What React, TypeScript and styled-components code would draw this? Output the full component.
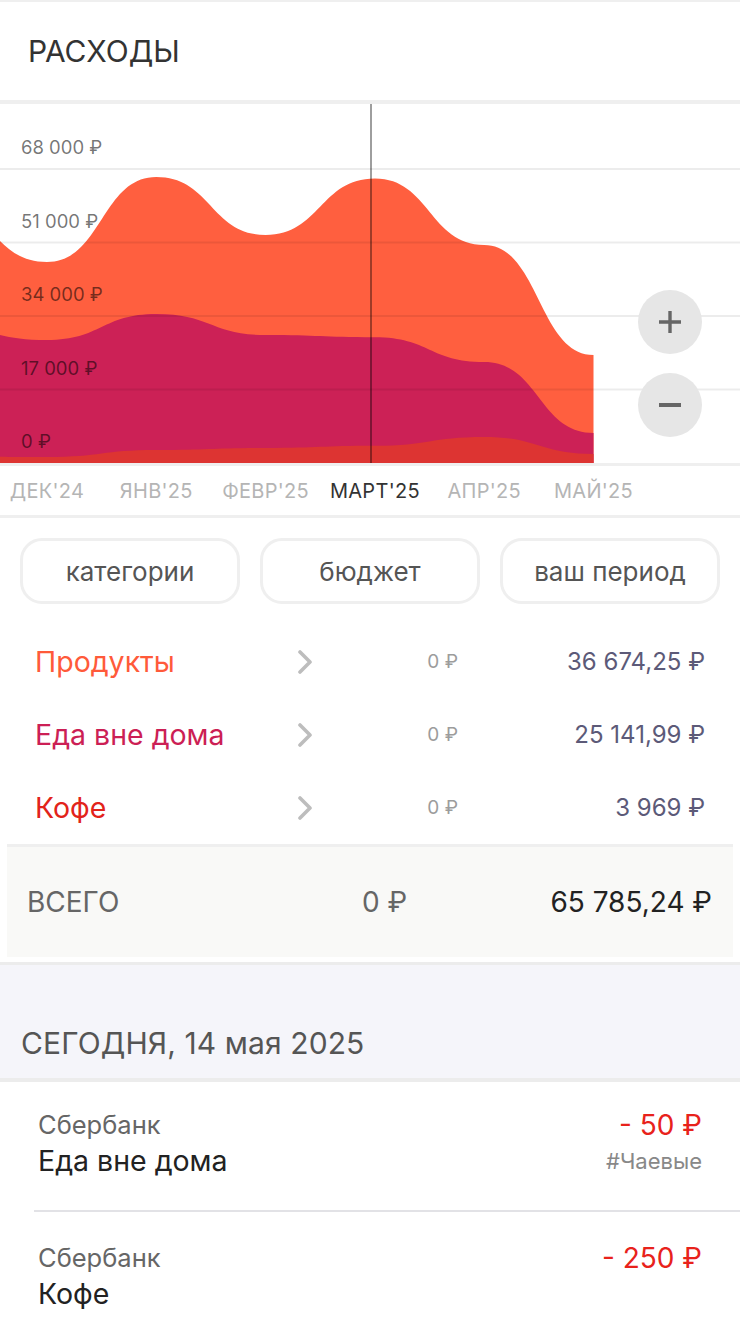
import React from "react";
import styled, { createGlobalStyle } from "styled-components";

interface Month {
  label: string;
  coffee: number;
  food: number;
  groceries: number;
}

interface Category {
  name: string;
  color: string;
  budget: string;
  amount: string;
}

interface Transaction {
  bank: string;
  category: string;
  amount: string;
  tag?: string;
}

// first month is off screen, only used so the curve enters from the left edge
const months: Month[] = [
  { label: "НОЯБ'24", coffee: 1620, food: 30070, groceries: 28210 },
  { label: "ДЕК'24", coffee: 1390, food: 27060, groceries: 18040 },
  { label: "ЯНВ'25", coffee: 3010, food: 31450, groceries: 31690 },
  { label: "ФЕВР'25", coffee: 3470, food: 26140, groceries: 23130 },
  { label: "МАРТ'25", coffee: 3969, food: 25142, groceries: 36674 },
  { label: "АПР'25", coffee: 6010, food: 17350, groceries: 27060 },
  { label: "МАЙ'25", coffee: 2080, food: 4860, groceries: 18040 },
];

const categories: Category[] = [
  { name: "Продукты", color: "#ff5a3a", budget: "0 ₽", amount: "36 674,25 ₽" },
  { name: "Еда вне дома", color: "#cc1f55", budget: "0 ₽", amount: "25 141,99 ₽" },
  { name: "Кофе", color: "#e2231a", budget: "0 ₽", amount: "3 969 ₽" },
];

const transactions: Transaction[] = [
  { bank: "Сбербанк", category: "Еда вне дома", amount: "- 50 ₽", tag: "#Чаевые" },
  { bank: "Сбербанк", category: "Кофе", amount: "- 250 ₽" },
];

const CHART_W = 740;
const CHART_H = 359;
const STEP = 109.3;
const FIRST_X = 47 - STEP;
const ACTIVE = 4;
const PX_PER_RUB = 73.5 / 17000;

const yOf = (v: number) => CHART_H - v * PX_PER_RUB;
const xOf = (i: number) => FIRST_X + i * STEP;

function areaPath(values: number[]) {
  const pts = values.map((v, i) => [xOf(i), yOf(v)]);
  let d = `M ${pts[0][0]} ${CHART_H} L ${pts[0][0]} ${pts[0][1]}`;
  for (let i = 1; i < pts.length; i++) {
    const [x0, y0] = pts[i - 1];
    const [x1, y1] = pts[i];
    const h = (x1 - x0) / 2;
    d += ` C ${x0 + h} ${y0} ${x1 - h} ${y1} ${x1} ${y1}`;
  }
  d += ` L ${pts[pts.length - 1][0]} ${CHART_H} Z`;
  return d;
}

const GlobalStyle = createGlobalStyle`
  html, body {
    margin: 0;
    padding: 0;
    background: #ffffff;
  }
  body {
    font-family: "Inter", "Roboto", "DejaVu Sans", sans-serif;
    -webkit-font-smoothing: antialiased;
  }
  * {
    box-sizing: border-box;
  }
`;

const Page = styled.div`
  width: 740px;
  background: #ffffff;
  overflow: hidden;
`;

const Header = styled.header`
  height: 104px;
  border-top: 2px solid #efefef;
  border-bottom: 4px solid #efefef;
  display: flex;
  align-items: center;
  padding-left: 28px;
`;

const Title = styled.h1`
  margin: 0;
  font-size: 30px;
  font-weight: 400;
  color: #333333;
`;

const ChartArea = styled.div`
  position: relative;
  height: 362px;
  border-bottom: 3px solid #efefef;

  svg {
    display: block;
  }
`;

const ZoomControls = styled.div`
  position: absolute;
  right: 38px;
  top: 186px;
  display: flex;
  flex-direction: column;
  gap: 19px;
`;

const ZoomButton = styled.button`
  width: 64px;
  height: 64px;
  border: none;
  border-radius: 50%;
  background: #e6e6e6;
  display: flex;
  align-items: center;
  justify-content: center;
  padding: 0;
`;

const AxisRow = styled.div`
  height: 52px;
  border-bottom: 3px solid #efefef;
  overflow: hidden;
`;

const AxisTrack = styled.div`
  height: 100%;
  margin-left: -7.65px;
  display: grid;
  grid-template-columns: repeat(6, ${STEP}px);
  align-items: center;
`;

const AxisLabel = styled.span<{ $active?: boolean }>`
  text-align: center;
  font-size: 20px;
  letter-spacing: 0.3px;
  color: ${(p) => (p.$active ? "#333333" : "#b5b5b5")};
`;

const Filters = styled.div`
  display: flex;
  gap: 20px;
  padding: 20px 20px 21px;
`;

const FilterButton = styled.button`
  flex: 1;
  height: 66px;
  border: 3px solid #efefef;
  border-radius: 22px;
  background: #ffffff;
  font-family: inherit;
  font-size: 26px;
  color: #555555;
`;

const CategoryRow = styled.div`
  display: grid;
  grid-template-columns: 255px 30px 138px 1fr;
  align-items: center;
  height: 73px;
  padding: 0 35px;
`;

const CategoryName = styled.span<{ $color: string }>`
  font-size: 28.5px;
  color: ${(p) => p.$color};
`;

const ChevronCell = styled.span`
  display: flex;
  justify-content: center;
`;

const Budget = styled.span`
  text-align: right;
  font-size: 19px;
  color: #9c9c9c;
`;

const Amount = styled.span`
  text-align: right;
  font-size: 24px;
  color: #5c5a78;
`;

const TotalBlock = styled.div`
  margin: 0 7px;
  height: 113px;
  border-top: 3px solid #efefef;
  background: #f9f9f7;
  display: grid;
  grid-template-columns: 335px auto 1fr;
  align-items: center;
  padding: 0 21px 0 20px;
`;

const TotalLabel = styled.span<{ $strong?: boolean }>`
  font-size: 28px;
  color: ${(p) => (p.$strong ? "#222222" : "#666666")};
  text-align: ${(p) => (p.$strong ? "right" : "left")};
`;

const DateSection = styled.div`
  margin-top: 5px;
  height: 120px;
  border-top: 3px solid #ececec;
  border-bottom: 4px solid #ececec;
  background: #f5f5fa;
  display: flex;
  align-items: flex-end;
  padding: 0 21px 17px;
`;

const DateTitle = styled.h2`
  margin: 0;
  font-size: 30px;
  line-height: 36px;
  font-weight: 400;
  letter-spacing: 0.1px;
  color: #555555;
`;

const TxItem = styled.div`
  margin-left: 34px;
  padding: 29px 38px 32px 4px;
  display: grid;
  grid-template-columns: 1fr auto;
  row-gap: 5px;

  & + & {
    border-top: 2px solid #e2e2e6;
    padding-top: 32px;
  }
`;

const TxBank = styled.span`
  font-size: 25.5px;
  line-height: 28px;
  color: #666666;
`;

const TxAmount = styled.span`
  text-align: right;
  font-size: 28px;
  line-height: 28px;
  color: #e8221b;
`;

const TxName = styled.span`
  font-size: 28.5px;
  line-height: 34px;
  color: #222222;
`;

const TxTag = styled.span`
  text-align: right;
  font-size: 22px;
  line-height: 34px;
  color: #888888;
`;

const Chevron = () => (
  <svg width="16" height="24" viewBox="0 0 16 24">
    <polyline
      points="3,2 13,12 3,22"
      fill="none"
      stroke="#bdbdbd"
      strokeWidth="3.6"
      strokeLinecap="round"
      strokeLinejoin="round"
    />
  </svg>
);

const Chart = () => {
  const coffee = months.map((m) => m.coffee);
  const food = months.map((m) => m.coffee + m.food);
  const total = months.map((m) => m.coffee + m.food + m.groceries);
  const ticks = [68000, 51000, 34000, 17000, 0];

  return (
    <svg width={CHART_W} height={CHART_H} viewBox={`0 0 ${CHART_W} ${CHART_H}`}>
      <path d={areaPath(total)} fill="#ff5f3f" />
      <path d={areaPath(food)} fill="#cc2156" />
      <path d={areaPath(coffee)} fill="#dd3432" />
      {ticks.map((t) => (
        <g key={t}>
          {t > 0 && (
            <line
              x1={0}
              x2={CHART_W}
              y1={yOf(t)}
              y2={yOf(t)}
              stroke="rgba(0,0,0,0.075)"
              strokeWidth={2}
            />
          )}
          <text
            x={21}
            y={yOf(t) - 15}
            fontSize={18.5}
            fill="rgba(0,0,0,0.55)"
            fontFamily="Inter, Roboto, sans-serif"
          >
            {t.toLocaleString("ru-RU").replace(/\u00a0|\u202f/g, " ")} ₽
          </text>
        </g>
      ))}
      <line x1={371} x2={371} y1={0} y2={CHART_H} stroke="rgba(0,0,0,0.38)" strokeWidth={2} />
    </svg>
  );
};

export default function App() {
  return (
    <Page>
      <GlobalStyle />
      <Header>
        <Title>РАСХОДЫ</Title>
      </Header>

      <ChartArea>
        <Chart />
        <ZoomControls>
          <ZoomButton aria-label="zoom in">
            <svg width="24" height="24" viewBox="0 0 24 24">
              <path d="M12 1 V23 M1 12 H23" stroke="#666" strokeWidth="3.4" />
            </svg>
          </ZoomButton>
          <ZoomButton aria-label="zoom out">
            <svg width="24" height="24" viewBox="0 0 24 24">
              <path d="M1 12 H23" stroke="#666" strokeWidth="4" />
            </svg>
          </ZoomButton>
        </ZoomControls>
      </ChartArea>

      <AxisRow>
        <AxisTrack>
          {months.slice(1).map((m, i) => (
            <AxisLabel key={m.label} $active={i + 1 === ACTIVE}>
              {m.label}
            </AxisLabel>
          ))}
        </AxisTrack>
      </AxisRow>

      <Filters>
        <FilterButton>категории</FilterButton>
        <FilterButton>бюджет</FilterButton>
        <FilterButton>ваш период</FilterButton>
      </Filters>

      {categories.map((c) => (
        <CategoryRow key={c.name}>
          <CategoryName $color={c.color}>{c.name}</CategoryName>
          <ChevronCell>
            <Chevron />
          </ChevronCell>
          <Budget>{c.budget}</Budget>
          <Amount>{c.amount}</Amount>
        </CategoryRow>
      ))}

      <TotalBlock>
        <TotalLabel>ВСЕГО</TotalLabel>
        <TotalLabel>0 ₽</TotalLabel>
        <TotalLabel $strong>65 785,24 ₽</TotalLabel>
      </TotalBlock>

      <DateSection>
        <DateTitle>СЕГОДНЯ, 14 мая 2025</DateTitle>
      </DateSection>

      {transactions.map((t, i) => (
        <TxItem key={i}>
          <TxBank>{t.bank}</TxBank>
          <TxAmount>{t.amount}</TxAmount>
          <TxName>{t.category}</TxName>
          <TxTag>{t.tag}</TxTag>
        </TxItem>
      ))}
    </Page>
  );
}
